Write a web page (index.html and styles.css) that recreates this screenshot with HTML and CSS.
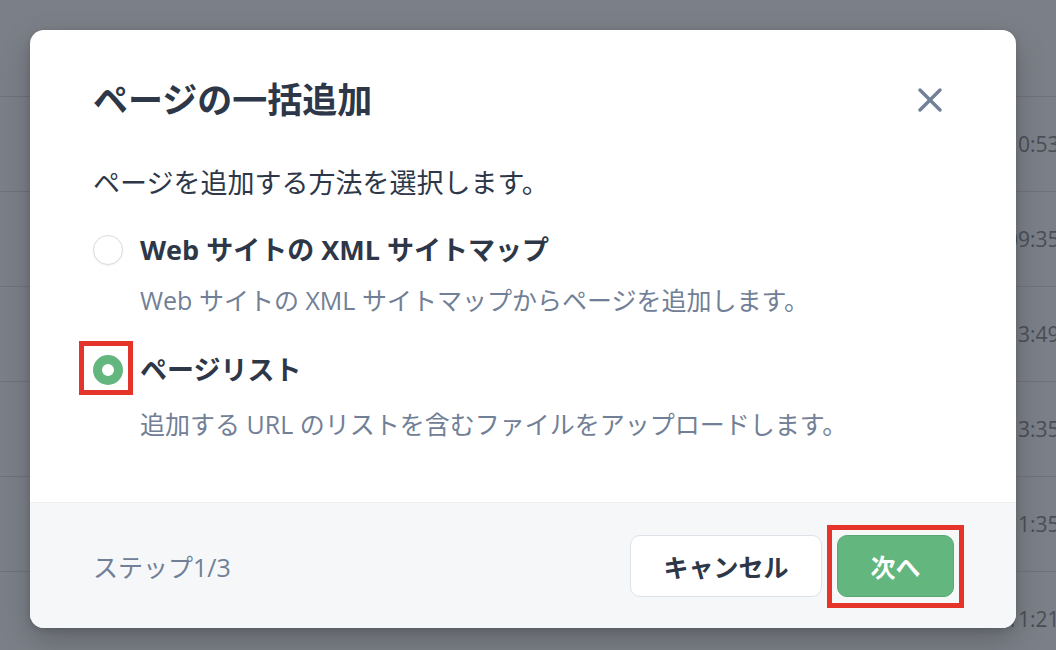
FILE: index.html
```html
<!DOCTYPE html>
<html lang="ja">
<head>
<meta charset="utf-8">
<link rel="stylesheet" href="styles.css">
</head>
<body>
<div class="table">
  <div class="row first"></div>
  <div class="row"><span class="time">10:53</span></div>
  <div class="row"><span class="time">09:35</span></div>
  <div class="row"><span class="time">13:49</span></div>
  <div class="row"><span class="time">13:35</span></div>
  <div class="row"><span class="time">11:35</span></div>
  <div class="row"><span class="time">11:21</span></div>
</div>

<div class="modal">
  <div class="header">
    <h2 class="title">ページの一括追加</h2>
    <svg class="close" width="24" height="24" viewBox="0 0 24 24"><path d="M2 2 L22 22 M22 2 L2 22" stroke="#718096" stroke-width="3.4" stroke-linecap="round"/></svg>
  </div>
  <div class="body">
    <p class="lead">ページを追加する方法を選択します。</p>
    <div class="option">
      <span class="radio"></span>
      <span class="label">Web サイトの XML サイトマップ</span>
    </div>
    <p class="desc">Web サイトの XML サイトマップからページを追加します。</p>
    <div class="option second">
      <span class="radio checked"><span class="mark"></span></span>
      <span class="label">ページリスト</span>
    </div>
    <p class="desc">追加する URL のリストを含むファイルをアップロードします。</p>
  </div>
  <div class="footer">
    <span class="step">ステップ1/3</span>
    <div class="actions">
      <button class="btn cancel">キャンセル</button>
      <button class="btn next">次へ<span class="mark"></span></button>
    </div>
  </div>
</div>
</body>
</html>
```
FILE: styles.css
```css
html, body {
  margin: 0;
  padding: 0;
  width: 1056px;
  height: 650px;
  overflow: hidden;
}
body {
  background: #7b7f87;
  font-family: "Open Sans", "Noto Sans CJK JP", sans-serif;
  position: relative;
}
.table {
  display: flex;
  flex-direction: column;
}
.row {
  height: 94px;
  border-bottom: 1px solid #6f737b;
  display: flex;
  align-items: center;
}
.row.first {
  height: 96px;
}
.time {
  padding-left: 1006px;
  font-size: 21px;
  color: #4a4f57;
  white-space: nowrap;
}
.modal {
  position: absolute;
  left: 30px;
  top: 30px;
  width: 986px;
  height: 598px;
  background: #fff;
  border-radius: 14px;
  box-shadow: 0 12px 30px rgba(0, 0, 0, 0.22), 0 2px 6px rgba(0, 0, 0, 0.12);
  display: flex;
  flex-direction: column;
}
.header {
  display: flex;
  justify-content: space-between;
  align-items: center;
  padding: 48px 74px 0 63px;
}
.title {
  margin: 0;
  font-size: 35px;
  line-height: 44px;
  font-weight: 700;
  color: #2d3748;
}
.close {
  display: block;
}
.body {
  flex: 1;
  padding: 43px 63px 0 63px;
  color: #2d3748;
}
.lead {
  margin: 0;
  font-size: 27px;
  line-height: 36px;
}
.option {
  display: flex;
  align-items: center;
  gap: 17px;
  margin-top: 31px;
  position: relative;
}
.option.second {
  margin-top: 34px;
}
.label {
  font-size: 27px;
  line-height: 36px;
  font-weight: 700;
}
.radio {
  width: 30px;
  height: 30px;
  box-sizing: border-box;
  border-radius: 50%;
  border: 1.5px solid #d6dbe2;
  box-shadow: 0 1px 2px rgba(0, 0, 0, 0.06);
  background: #fff;
  position: relative;
  flex: none;
}
.radio.checked {
  border: 9px solid #64b67f;
  box-shadow: none;
}
.radio .mark {
  position: absolute;
  left: -23px;
  top: -23px;
  width: 54px;
  height: 54px;
  box-sizing: border-box;
  border: 5px solid #e5352a;
}
.desc {
  margin: 14px 0 0 47px;
  font-size: 25px;
  line-height: 36px;
  color: #718096;
}
.option.second + .desc {
  margin-top: 18px;
}
.footer {
  height: 126px;
  box-sizing: border-box;
  background: #f6f7f9;
  border-top: 1px solid #eceef2;
  border-radius: 0 0 14px 14px;
  display: flex;
  justify-content: space-between;
  align-items: center;
  padding: 0 62px 0 63px;
}
.step {
  font-size: 25px;
  color: #718096;
}
.actions {
  display: flex;
  gap: 15px;
}
.btn {
  height: 62px;
  border-radius: 10px;
  font-family: "Open Sans", "Noto Sans CJK JP", sans-serif;
  font-size: 25px;
  font-weight: 700;
  padding: 0;
  position: relative;
}
.cancel {
  width: 192px;
  background: #fff;
  border: 1.5px solid #dde2e9;
  color: #2d3748;
}
.next {
  width: 117px;
  background: #63b67e;
  border: 1.5px solid #5aa974;
  color: #fff;
}
.next .mark {
  position: absolute;
  left: -11px;
  top: -11px;
  right: -11px;
  bottom: -12px;
  border: 5px solid #e5352a;
}
```
